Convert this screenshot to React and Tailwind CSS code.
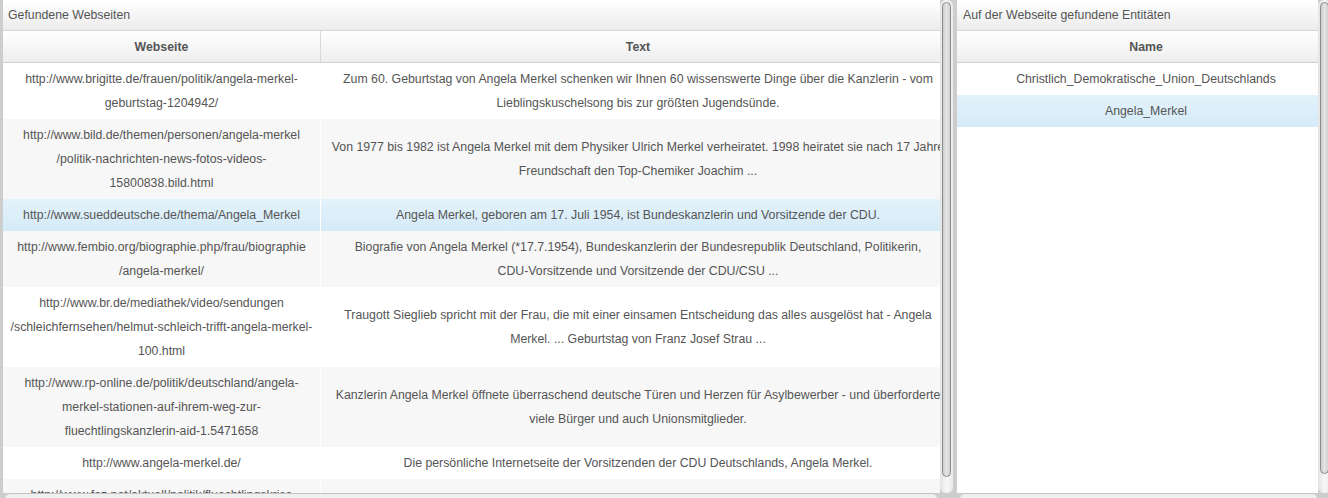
import React from "react";

const rows = [
  {
    url: ["http://www.brigitte.de/frauen/politik/angela-merkel-", "geburtstag-1204942/"],
    text: [
      "Zum 60. Geburtstag von Angela Merkel schenken wir Ihnen 60 wissenswerte Dinge über die Kanzlerin - vom",
      "Lieblingskuschelsong bis zur größten Jugendsünde.",
    ],
  },
  {
    url: ["http://www.bild.de/themen/personen/angela-merkel", "/politik-nachrichten-news-fotos-videos-", "15800838.bild.html"],
    text: [
      "Von 1977 bis 1982 ist Angela Merkel mit dem Physiker Ulrich Merkel verheiratet. 1998 heiratet sie nach 17 Jahre",
      "Freundschaft den Top-Chemiker Joachim ...",
    ],
  },
  {
    url: ["http://www.sueddeutsche.de/thema/Angela_Merkel"],
    text: ["Angela Merkel, geboren am 17. Juli 1954, ist Bundeskanzlerin und Vorsitzende der CDU."],
    selected: true,
  },
  {
    url: ["http://www.fembio.org/biographie.php/frau/biographie", "/angela-merkel/"],
    text: [
      "Biografie von Angela Merkel (*17.7.1954), Bundeskanzlerin der Bundesrepublik Deutschland, Politikerin,",
      "CDU-Vorsitzende und Vorsitzende der CDU/CSU ...",
    ],
  },
  {
    url: ["http://www.br.de/mediathek/video/sendungen", "/schleichfernsehen/helmut-schleich-trifft-angela-merkel-", "100.html"],
    text: [
      "Traugott Sieglieb spricht mit der Frau, die mit einer einsamen Entscheidung das alles ausgelöst hat - Angela",
      "Merkel. ... Geburtstag von Franz Josef Strau ...",
    ],
  },
  {
    url: ["http://www.rp-online.de/politik/deutschland/angela-", "merkel-stationen-auf-ihrem-weg-zur-", "fluechtlingskanzlerin-aid-1.5471658"],
    text: [
      "Kanzlerin Angela Merkel öffnete überraschend deutsche Türen und Herzen für Asylbewerber - und überforderte",
      "viele Bürger und auch Unionsmitglieder.",
    ],
  },
  {
    url: ["http://www.angela-merkel.de/"],
    text: ["Die persönliche Internetseite der Vorsitzenden der CDU Deutschlands, Angela Merkel."],
  },
  {
    url: ["http://www.faz.net/aktuell/politik/fluechtlingskrise", "/angela-merkel-im-portraet.html"],
    text: ["Angela Merkel im Porträt."],
  },
];

function VScroll({ thumb }) {
  return (
    <div className="w-[13px] h-full shrink-0 rounded-[6px] bg-gradient-to-r from-[#e4e4e4] via-[#f6f6f6] to-[#ebebeb] pt-[2px] px-[2px]">
      <div
        className={
          "w-[9px] rounded-full border border-[#8c8c8c] bg-gradient-to-r from-[#cdcdcd] via-[#e4e4e4] to-[#d2d2d2] " +
          thumb
        }
      />
    </div>
  );
}

function TitleBar({ children }) {
  return (
    <div className="h-[31px] shrink-0 border-b border-[#d6d6d6] bg-gradient-to-b from-white to-[#ececec] pl-[5px] text-[12.3px] leading-[30px] text-[#555]">
      {children}
    </div>
  );
}

export default function App() {
  return (
    <div className="w-[1328px] h-[498px] overflow-hidden bg-[#cdcdcd] flex pl-[3px] gap-[4px] font-['Liberation_Sans',Arial,sans-serif] text-[#555]">
      {/* Left panel */}
      <div className="w-[950px] shrink-0 flex flex-col">
        <div className="h-[493px] flex">
          <div className="w-[937px] shrink-0 overflow-hidden bg-white flex flex-col">
            <TitleBar>Gefundene Webseiten</TitleBar>
            <div className="w-[952px] shrink-0">
              <div className="h-[32px] flex border-b border-[#cfcfcf] bg-gradient-to-b from-white to-[#eeeeee] text-[12.3px] font-bold">
                <div className="w-[318px] border-r border-[#d9d9d9] flex items-center justify-center pt-[2px]">Webseite</div>
                <div className="w-[634px] flex items-center justify-center pt-[2px]">Text</div>
              </div>
              {rows.map((r, i) => {
                const bg = r.selected
                  ? "bg-gradient-to-b from-[#e3f2fb] to-[#d5ebf8]"
                  : i % 2 === 1
                  ? "bg-[#f7f7f7]"
                  : "bg-white";
                return (
                  <div key={i} className={"flex text-[12.3px] leading-[24px] " + bg}>
                    <div className="w-[318px] shrink-0 border-r border-white py-[4px] flex flex-col items-center justify-center text-center">
                      {r.url.map((l, j) => (
                        <div key={j} className="whitespace-nowrap">{l}</div>
                      ))}
                    </div>
                    <div className="w-[634px] shrink-0 py-[4px] flex flex-col items-center justify-center text-center">
                      {r.text.map((l, j) => (
                        <div key={j} className="whitespace-nowrap">{l}</div>
                      ))}
                    </div>
                  </div>
                );
              })}
            </div>
          </div>
          <VScroll thumb="h-[475px]" />
        </div>
        <div className="h-[5px] pl-[2px]">
          <div className="w-[932px] h-[5px] rounded-t-[5px] border-t border-[#c4c4c4] bg-[#efefef]" />
        </div>
      </div>

      {/* Right panel */}
      <div className="w-[371px] shrink-0 flex flex-col overflow-hidden">
        <div className="h-[493px] flex">
          <div className="w-[361px] shrink-0 overflow-hidden bg-white flex flex-col">
            <TitleBar>
              <span className="pl-[1px]">Auf der Webseite gefundene Entitäten</span>
            </TitleBar>
            <div className="w-[378px] shrink-0">
              <div className="h-[32px] flex items-center justify-center pt-[2px] border-b border-[#cfcfcf] bg-gradient-to-b from-white to-[#eeeeee] text-[12.3px] font-bold">
                Name
              </div>
              <div className="h-[32px] flex items-center justify-center bg-white text-[12.3px] whitespace-nowrap">
                Christlich_Demokratische_Union_Deutschlands
              </div>
              <div className="h-[32px] flex items-center justify-center bg-gradient-to-b from-[#e3f2fb] to-[#d5ebf8] text-[12.3px] whitespace-nowrap">
                Angela_Merkel
              </div>
            </div>
          </div>
          <VScroll thumb="h-[472px]" />
        </div>
        <div className="h-[5px] pl-[3px]">
          <div className="w-[357px] h-[5px] rounded-t-[5px] border-t border-[#c4c4c4] bg-[#efefef]" />
        </div>
      </div>
    </div>
  );
}
